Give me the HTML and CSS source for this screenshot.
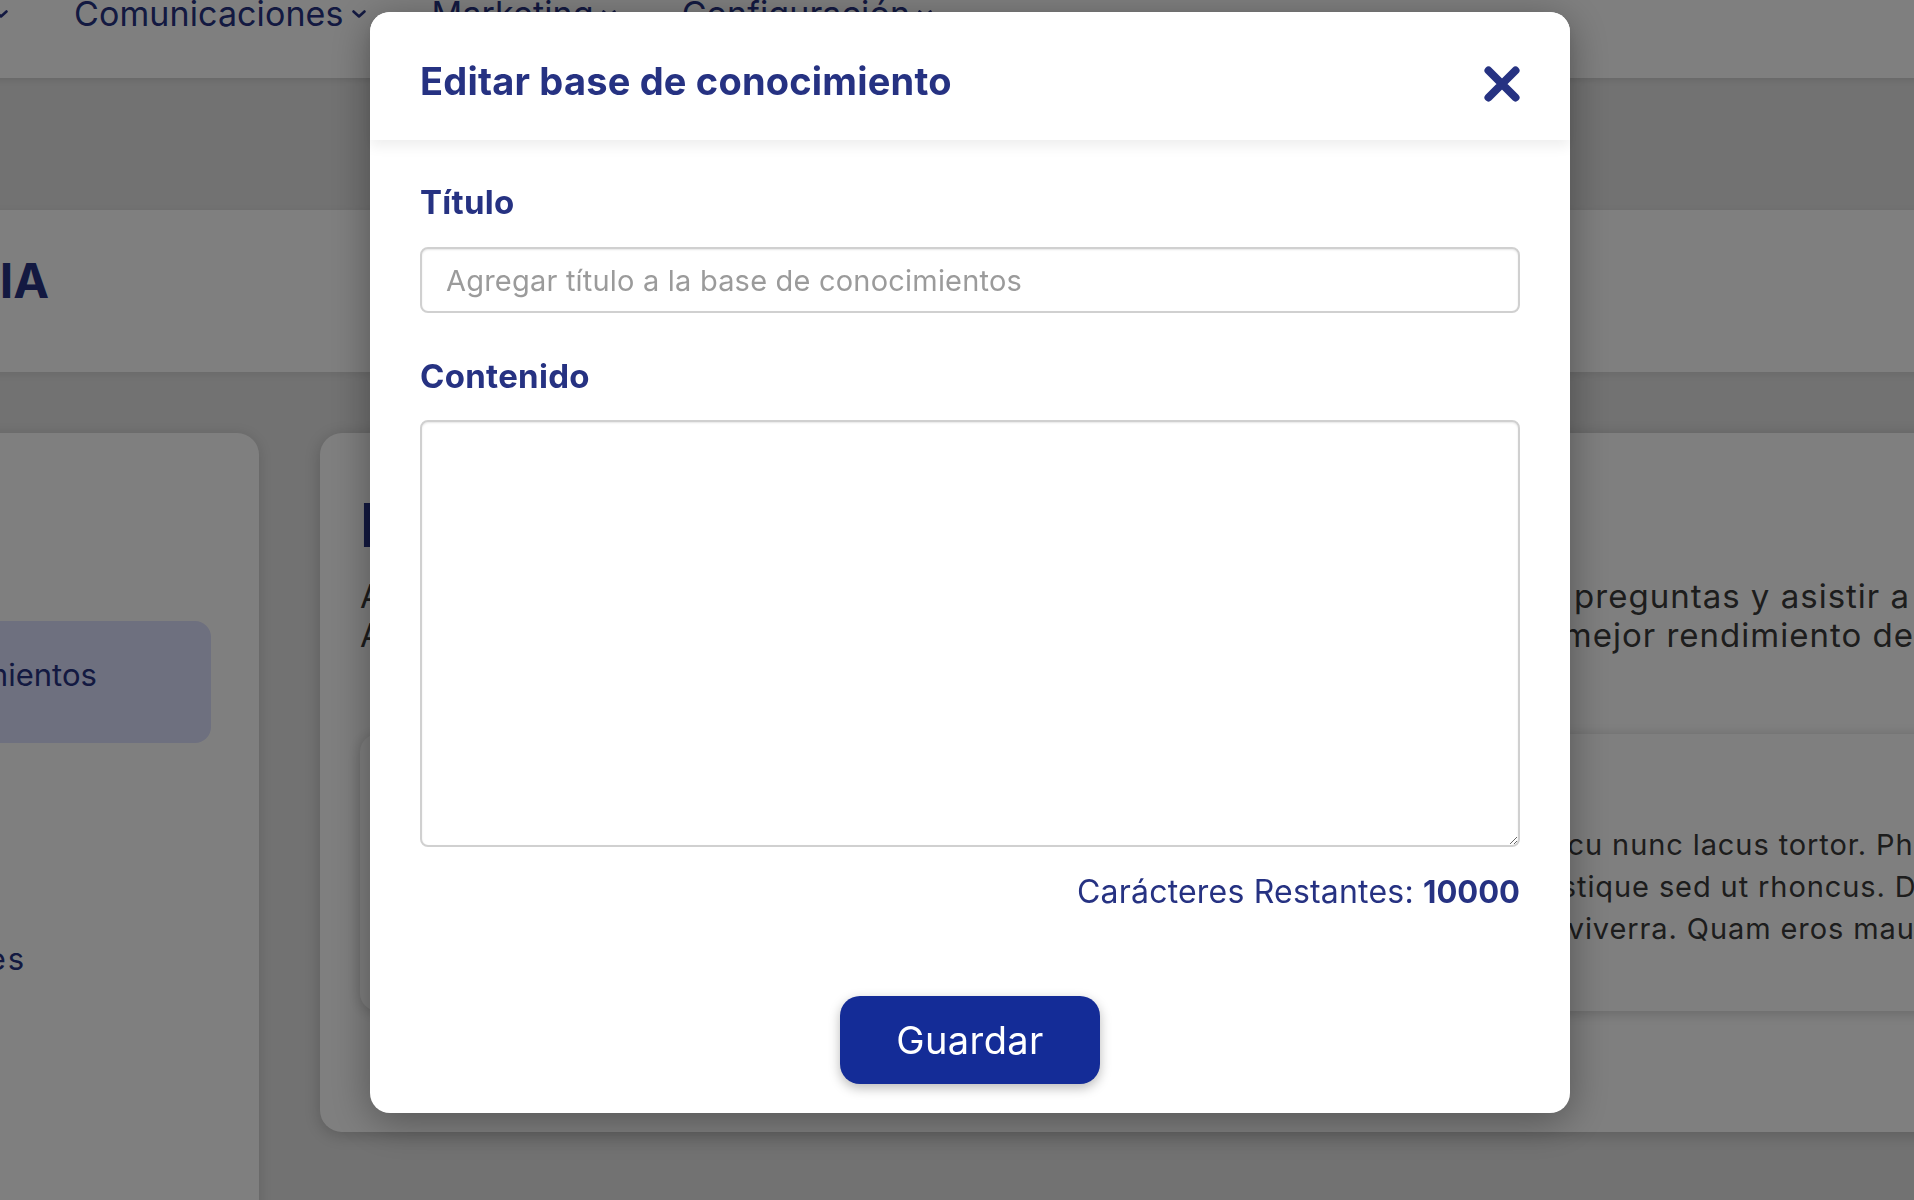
FILE: index.html
```html
<!DOCTYPE html>
<html lang="es">
<head>
<meta charset="utf-8">
<title>Editar base de conocimiento</title>
<link rel="stylesheet" href="styles.css">
</head>
<body>
<div class="page">
  <nav class="topnav">
    <div class="nav-lead">
      <div class="nav-item">Clientes<svg class="chev" viewBox="0 0 14 8"><path d="M1.5 1.5 L7 6.5 L12.5 1.5"/></svg></div>
    </div>
    <div class="nav-item">Comunicaciones<svg class="chev" viewBox="0 0 14 8"><path d="M1.5 1.5 L7 6.5 L12.5 1.5"/></svg></div>
    <div class="nav-item">Marketing<svg class="chev" viewBox="0 0 14 8"><path d="M1.5 1.5 L7 6.5 L12.5 1.5"/></svg></div>
    <div class="nav-item">Configuración<svg class="chev" viewBox="0 0 14 8"><path d="M1.5 1.5 L7 6.5 L12.5 1.5"/></svg></div>
  </nav>

  <header class="page-header">
    <div class="title-box"><h1 class="page-title">Asistente IA</h1></div>
  </header>

  <div class="content">
    <aside class="sidebar">
      <div class="side-item">Asistente</div>
      <div class="side-item active">Base de conocimientos</div>
      <div class="side-item">Historial</div>
      <div class="side-item side-wide">Configuraciones</div>
    </aside>

    <main class="main-card">
      <h2 class="main-title">Base de conocimientos</h2>
      <p class="lead">
        <span class="line">Añade datos a tu base de conocimientos para que la IA pueda responder preguntas y asistir a tus clientes de manera precisa.</span>
        <span class="line">Asegúrate de que el contenido sea nítido y actualizado, para obtener un mejor rendimiento de la IA en cada conversación.</span>
      </p>
      <div class="kb-card">
        <span class="line">Lorem ipsum dolor sit amet, consectetur adipiscing elit. Viverra ullamcorper a arcu nunc lacus tortor. Phasellus egestas tellus rutrum.</span>
        <span class="line">Faucibus nisl tincidunt eget nullam nisi sit amet facilisis magna etiam tempor, tristique sed ut rhoncus. Donec ultrices tincidunt.</span>
        <span class="line">Ac turpis egestas maecenas pharetra convallis posuere morbi leo urna molestie viverra. Quam eros mauris pellentesque pulvinar.</span>
      </div>
    </main>
  </div>
</div>

<div class="overlay">
  <div class="modal">
    <div class="modal-header">
      <h3 class="modal-title">Editar base de conocimiento</h3>
      <button class="close-btn" type="button" aria-label="Cerrar">
        <svg viewBox="0 0 36 36"><path d="M4.5 4.5 L31.5 31.5 M31.5 4.5 L4.5 31.5"/></svg>
      </button>
    </div>
    <div class="modal-body">
      <label class="field-label" for="titulo">Título</label>
      <input class="field-input" id="titulo" type="text" placeholder="Agregar título a la base de conocimientos">
      <label class="field-label label-gap" for="contenido">Contenido</label>
      <textarea class="field-area" id="contenido"></textarea>
      <div class="counter">Carácteres Restantes: <strong>10000</strong></div>
      <button class="save-btn" type="button">Guardar</button>
    </div>
  </div>
</div>
</body>
</html>
```
FILE: styles.css
```css
* { box-sizing: border-box; }

html, body {
  margin: 0;
  height: 100%;
  overflow: hidden;
}

body {
  font-family: Inter, "Noto Sans", sans-serif;
  background: #e4e4e4;
  color: #263282;
}

/* ---------- background page ---------- */
.page {
  margin-left: -320px;
  width: 2600px;
}

.topnav {
  height: 78px;
  background: #ffffff;
  display: flex;
  align-items: flex-start;
  gap: 66px;
  box-shadow: 0 2px 6px rgba(0, 0, 0, 0.10);
  position: relative;
}

.nav-lead {
  width: 328px;
  display: flex;
  justify-content: flex-end;
}

.nav-item {
  display: flex;
  align-items: center;
  gap: 8px;
  margin-top: -6px;
  font-size: 34px;
  line-height: 40px;
  letter-spacing: 0.1px;
  color: #263282;
  white-space: nowrap;
}

.chev {
  width: 14px;
  height: 8px;
  fill: none;
  stroke: #263282;
  stroke-width: 2.6;
  stroke-linecap: round;
  stroke-linejoin: round;
}

.page-header {
  margin-top: 132px;
  background: #ffffff;
  padding: 42px 0 62px;
  box-shadow: 0 2px 8px rgba(0, 0, 0, 0.08);
}

.title-box {
  width: 369px;
  display: flex;
  justify-content: flex-end;
}

.page-title {
  margin: 0;
  font-size: 48px;
  line-height: 58px;
  font-weight: 700;
  white-space: nowrap;
  color: #263282;
}

.content {
  margin-top: 61px;
  display: flex;
  align-items: flex-start;
  gap: 61px;
  padding-left: 24px;
}

.sidebar {
  width: 555px;
  min-height: 900px;
  background: #ffffff;
  border-radius: 0 22px 0 0;
  padding: 46px 48px 0 44px;
  display: flex;
  flex-direction: column;
  gap: 20px;
  box-shadow: 0 2px 14px rgba(0, 0, 0, 0.14);
}

.side-item {
  height: 122px;
  display: flex;
  align-items: center;
  padding: 0 0 16px 8px;
  border-radius: 16px;
  font-size: 31px;
  color: #263282;
  white-space: nowrap;
}

.side-item.active {
  background: #dce0ff;
}

.side-wide {
  letter-spacing: 1.9px;
}

.main-card {
  width: 1800px;
  background: #ffffff;
  border-radius: 22px;
  padding: 56px 40px 121px;
  box-shadow: 0 3px 16px rgba(0, 0, 0, 0.20);
}

.main-title {
  margin: 0;
  font-size: 60px;
  line-height: 72px;
  font-weight: 700;
  color: #263282;
  white-space: nowrap;
}

.lead {
  margin: 16px 0 0;
  font-size: 33px;
  line-height: 39px;
  letter-spacing: 1px;
  color: #3a3a3a;
}

.line {
  display: block;
  white-space: nowrap;
}

.kb-card {
  margin-top: 79px;
  width: 1640px;
  background: #ffffff;
  border-radius: 18px;
  padding: 90px 40px 61px;
  font-size: 29px;
  line-height: 42px;
  letter-spacing: 0.9px;
  color: #3a3a3a;
  box-shadow: 0 2px 14px rgba(0, 0, 0, 0.20);
}

/* ---------- overlay + modal ---------- */
.overlay {
  position: fixed;
  inset: 0;
  background: rgba(0, 0, 0, 0.5);
}

.modal {
  width: 1200px;
  margin: 12px 0 0 370px;
  background: #ffffff;
  border-radius: 20px;
  box-shadow: 0 8px 40px rgba(0, 0, 0, 0.35);
}

.modal-header {
  position: relative;
  z-index: 1;
  display: flex;
  justify-content: space-between;
  align-items: flex-start;
  padding: 46px 50px 36px;
  background: #ffffff;
  border-radius: 20px 20px 0 0;
  box-shadow: 0 6px 14px rgba(0, 0, 0, 0.07);
}

.modal-title {
  margin: 0;
  font-size: 38px;
  line-height: 46px;
  font-weight: 700;
  letter-spacing: 0.2px;
  color: #263282;
}

.close-btn {
  margin-top: 8px;
  width: 36px;
  height: 36px;
  padding: 0;
  border: 0;
  background: transparent;
  cursor: pointer;
}

.close-btn svg {
  display: block;
  width: 36px;
  height: 36px;
  fill: none;
  stroke: #263282;
  stroke-width: 8;
  stroke-linecap: round;
}

.modal-body {
  padding: 42px 50px 29px;
  display: flex;
  flex-direction: column;
}

.field-label {
  display: block;
  font-size: 33px;
  line-height: 40px;
  font-weight: 700;
  letter-spacing: 0.3px;
  color: #263282;
}

.label-gap {
  margin-top: 43px;
}

.field-input {
  display: block;
  width: 100%;
  height: 66px;
  margin-top: 25px;
  padding: 0 24px;
  border: 2px solid #d0d0d0;
  border-radius: 8px;
  box-shadow: inset 0 1px 2px rgba(0, 0, 0, 0.10);
  font-family: Inter, "Noto Sans", sans-serif;
  font-size: 29px;
  letter-spacing: 0.2px;
  color: #333333;
  outline: none;
}

.field-input::placeholder {
  color: #9b9b9b;
}

.field-area {
  display: block;
  width: 100%;
  height: 427px;
  margin-top: 24px;
  padding: 20px 24px;
  border: 2px solid #d0d0d0;
  border-radius: 8px;
  box-shadow: inset 0 1px 2px rgba(0, 0, 0, 0.10);
  font-family: Inter, "Noto Sans", sans-serif;
  font-size: 29px;
  color: #333333;
  outline: none;
  resize: both;
}

.counter {
  margin-top: 25px;
  text-align: right;
  font-size: 32px;
  line-height: 40px;
  letter-spacing: 0.2px;
  color: #263282;
}

.counter strong {
  font-weight: 700;
  font-size: 31px;
  letter-spacing: 0;
}

.save-btn {
  align-self: center;
  margin-top: 84px;
  width: 260px;
  height: 88px;
  border: 0;
  border-radius: 20px;
  background: #142c97;
  color: #ffffff;
  font-family: Inter, "Noto Sans", sans-serif;
  font-size: 38px;
  font-weight: 400;
  letter-spacing: 0.4px;
  box-shadow: 0 4px 12px rgba(0, 0, 0, 0.28);
  cursor: pointer;
}
```
